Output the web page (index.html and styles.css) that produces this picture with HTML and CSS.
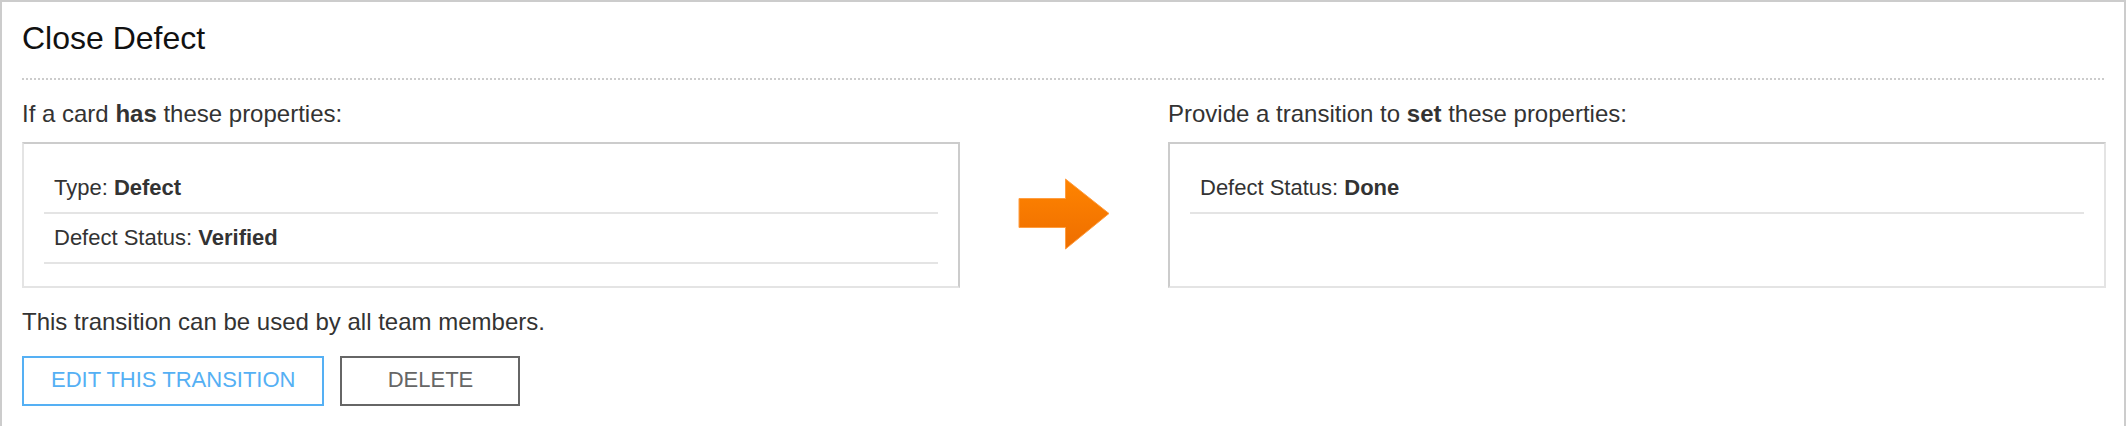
FILE: index.html
```html
<!DOCTYPE html>
<html lang="en">
<head>
<meta charset="utf-8">
<title>Close Defect</title>
<link rel="stylesheet" href="styles.css">
</head>
<body>
<main class="transition">
  <h1 class="title">Close Defect</h1>
  <div class="flow">
    <section class="side">
      <h2 class="caption">If a card <b>has</b> these properties:</h2>
      <ul class="box box-from">
        <li class="property">Type: <b>Defect</b></li>
        <li class="property">Defect Status: <b>Verified</b></li>
      </ul>
    </section>
    <svg class="arrow" viewBox="0 0 92 72" aria-hidden="true">
      <defs>
        <linearGradient id="orange" x1="0" y1="0" x2="0" y2="1">
          <stop offset="0" stop-color="#ff8400"/>
          <stop offset="1" stop-color="#ee6e00"/>
        </linearGradient>
      </defs>
      <path d="M1 20.500H47.500V1L91 35.500L47.500 71V49.500H1Z" fill="url(#orange)" stroke="#ff9d40" stroke-width="1"/>
    </svg>
    <section class="side">
      <h2 class="caption">Provide a transition to <b>set</b> these properties:</h2>
      <ul class="box box-to">
        <li class="property">Defect Status: <b>Done</b></li>
      </ul>
    </section>
  </div>
  <p class="note">This transition can be used by all team members.</p>
  <div class="actions">
    <button class="button button-primary" type="button">EDIT THIS TRANSITION</button>
    <button class="button" type="button">DELETE</button>
  </div>
</main>
</body>
</html>
```

FILE: styles.css
```css
* {
  box-sizing: border-box;
}

body {
  margin: 0;
  background: #fff;
  color: #333;
  font-family: "Liberation Sans", Arial, sans-serif;
  font-size: 24px;
}

.transition {
  min-height: 100vh;
  padding: 0 18px 0 20px;
  border: 2px solid #ccc;
  border-bottom: 0;
}

.title {
  margin: 0 2px 0 0;
  padding: 16px 0 20px;
  border-bottom: 2px dotted #ccc;
  color: #111;
  font-size: 32px;
  line-height: 40px;
  font-weight: 400;
}

.flow {
  display: grid;
  grid-template-columns: 1fr 92px 1fr;
  column-gap: 58px;
  padding-top: 18px;
}

.side {
  display: flex;
  flex-direction: column;
}

.caption {
  margin: 0 0 12px;
  font-size: 24px;
  line-height: 32px;
  font-weight: 400;
}

.box {
  flex: 1;
  margin: 0;
  padding: 20px 20px 22px;
  border: 2px solid #e4e4e4;
  border-top-color: #ccc;
  list-style: none;
}

.box-from {
  border-right-color: #ccc;
}

.box-to {
  border-left-color: #ccc;
}

.property {
  padding: 10px;
  border-bottom: 2px solid #e4e4e4;
  font-size: 22px;
  line-height: 28px;
}

.arrow {
  width: 92px;
  height: 72px;
  margin-top: 80px;
}

.note {
  margin: 18px 0;
  line-height: 32px;
}

.actions {
  display: flex;
  gap: 16px;
}

.button {
  min-width: 180px;
  height: 50px;
  padding: 0 27px 2px;
  border: 2px solid #666;
  background: #fff;
  color: #666;
  font-family: inherit;
  font-size: 22px;
}

.button-primary {
  border-color: #55b0f4;
  color: #55b0f4;
}
```
